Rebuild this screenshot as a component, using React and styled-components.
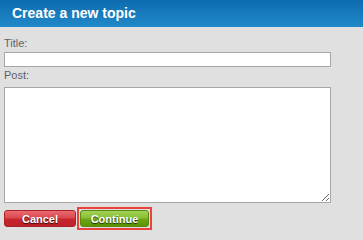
import React from "react";
import styled, { createGlobalStyle } from "styled-components";

const Global = createGlobalStyle`
  html, body { margin: 0; padding: 0; background: #e0e0e0; }
  body { font-family: "Liberation Sans", Arial, sans-serif; }
`;

const Page = styled.div`
  width: 363px;
  height: 235px;
  background: #e0e0e0;
  overflow: hidden;
`;

const Header = styled.div`
  height: 27px;
  background: linear-gradient(to bottom, #0d6cae, #2189c9);
  display: flex;
  align-items: center;
  padding-left: 12px;
  box-sizing: border-box;
`;

const Title = styled.h1`
  margin: 0;
  font-size: 14px;
  font-weight: bold;
  color: #fff;
  line-height: 16px;
  padding-bottom: 1px;
`;

const Form = styled.form`
  padding: 10px 4px 0 4px;
  display: flex;
  flex-direction: column;
`;

const Label = styled.label`
  font-size: 11px;
  line-height: 13px;
  color: #5d6166;
  margin-bottom: ${(p) => p.$mb || 2}px;
`;

const Input = styled.input`
  width: 327px;
  height: 15px;
  box-sizing: border-box;
  border: 1px solid #a6a6a6;
  background: #fff;
  margin: 0 0 2px 0;
  padding: 0 2px;
  font-family: inherit;
  font-size: 11px;
  outline: none;
`;

const TextArea = styled.textarea`
  width: 327px;
  height: 116px;
  box-sizing: border-box;
  border: 1px solid #a6a6a6;
  background: #fff;
  margin: 0;
  padding: 2px;
  font-family: inherit;
  font-size: 11px;
  display: block;
  outline: none;
`;

const Buttons = styled.div`
  display: flex;
  align-items: center;
  gap: 1px;
  margin-top: 4px;
`;

const FocusFrame = styled.span`
  display: inline-flex;
  border: 2px solid #e8433c;
  padding: 1px;
`;

const Button = styled.button`
  width: ${(p) => p.$w}px;
  height: 17px;
  border: 1px solid ${(p) => (p.$green ? "#5a8a10" : "#a8222a")};
  border-radius: 3px;
  padding: 0;
  font-family: "Liberation Sans", Arial, sans-serif;
  font-size: 11px;
  font-weight: bold;
  color: #fff;
  text-shadow: 0 1px 1px rgba(0, 0, 0, 0.75);
  box-sizing: border-box;
  outline: none;
  background: ${(p) =>
    p.$green
      ? "linear-gradient(to bottom, #a2d258 0%, #88c034 45%, #6ea614 55%, #5c9406 100%)"
      : "linear-gradient(to bottom, #ea6a70 0%, #dc4850 45%, #c8262e 55%, #c02028 100%)"};
`;

export default function App() {
  return (
    <Page>
      <Global />
      <Header>
        <Title>Create a new topic</Title>
      </Header>
      <Form onSubmit={(e) => e.preventDefault()}>
        <Label htmlFor="t">Title:</Label>
        <Input id="t" type="text" />
        <Label htmlFor="p" $mb={5}>Post:</Label>
        <TextArea id="p" />
        <Buttons>
          <Button type="button" $w={72}>Cancel</Button>
          <FocusFrame>
            <Button type="submit" $w={69} $green>Continue</Button>
          </FocusFrame>
        </Buttons>
      </Form>
    </Page>
  );
}
